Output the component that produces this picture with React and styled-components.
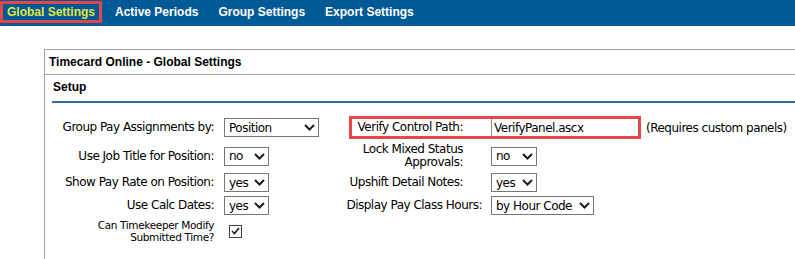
import React from "react";
import styled, { createGlobalStyle } from "styled-components";

const GlobalStyle = createGlobalStyle`
  html, body {
    margin: 0;
    padding: 0;
    background: #ffffff;
    overflow: hidden;
  }
  body {
    font-family: "DejaVu Sans", Verdana, sans-serif;
    color: #000;
  }
`;

const Nav = styled.nav`
  display: flex;
  align-items: flex-start;
  gap: 6px;
  height: 26px;
  padding-top: 1px;
  box-sizing: border-box;
  background: #015a96;
`;

const NavItem = styled.a`
  display: block;
  height: 22px;
  box-sizing: border-box;
  padding: 0 4px;
  border: 3px solid ${(p) => (p.$active ? "#e5474a" : "transparent")};
  font-family: "Liberation Sans", Arial, sans-serif;
  font-weight: bold;
  font-size: 12px;
  line-height: 16px;
  color: ${(p) => (p.$active ? "#e2e63a" : "#ffffff")};
  text-decoration: none;
  white-space: nowrap;
`;

const Page = styled.main`
  padding: 23px 0 0 44px;
`;

const Panel = styled.section`
  min-height: calc(100vh - 49px);
  border: 1px solid #a3a3a3;
  border-right: none;
  border-bottom: none;
  box-sizing: border-box;
`;

const PanelHeader = styled.h1`
  margin: 0;
  height: 25px;
  box-sizing: border-box;
  padding: 0 4px;
  border-bottom: 1px solid #a3a3a3;
  font-family: "Liberation Sans", Arial, sans-serif;
  font-weight: bold;
  font-size: 12px;
  line-height: 24px;
`;

const Section = styled.div`
  margin: 0 0 0 7px;
`;

const SectionTitle = styled.h2`
  margin: 0;
  padding: 5px 1px 7px;
  border-bottom: 2px solid #336699;
  font-family: "Liberation Sans", Arial, sans-serif;
  font-weight: bold;
  font-size: 12px;
  line-height: 14px;
`;

const FormGrid = styled.div`
  display: grid;
  grid-template-columns: 172px 122px 145px 150px auto;
  row-gap: 4px;
  align-items: center;
  padding-top: 13px;
  font-size: 12px;
  letter-spacing: -0.5px;
`;

const Label = styled.label`
  text-align: right;
  padding-right: ${(p) => p.$pad ?? 10}px;
  font-size: ${(p) => (p.$small ? "10.5px" : "12px")};
  line-height: ${(p) => (p.$small ? "12px" : "13px")};
  letter-spacing: ${(p) => (p.$small ? "-0.35px" : "-0.5px")};
  white-space: nowrap;
`;

const Highlight = styled.div`
  grid-column: 3 / 5;
  margin-left: 3px;
  display: flex;
  align-items: center;
  height: 23px;
  box-sizing: border-box;
  border: 3px solid #e5474a;
`;

const InlineLabel = styled.label`
  flex: 0 0 139px;
  box-sizing: border-box;
  padding-right: 28px;
  text-align: right;
  white-space: nowrap;
  line-height: 13px;
`;

const TextInput = styled.input`
  flex: 1;
  min-width: 0;
  height: 17px;
  box-sizing: border-box;
  border: none;
  border-left: 1px solid #8a8a8a;
  padding: 0 0 0 2px;
  font-family: inherit;
  font-size: 12px;
  letter-spacing: -0.5px;
  color: #000;
  background: #fff;
  outline: none;
`;

const Note = styled.span`
  padding-left: 5px;
  white-space: nowrap;
`;

const SelectWrap = styled.span`
  position: relative;
  display: inline-block;
  justify-self: start;
  width: ${(p) => p.$w}px;
  height: 19px;
`;

const NativeSelect = styled.select`
  appearance: none;
  -webkit-appearance: none;
  width: 100%;
  height: 19px;
  box-sizing: border-box;
  margin: 0;
  border: 1px solid #767676;
  border-radius: 0;
  padding: 0 0 0 4px;
  background: #fff;
  font-family: "DejaVu Sans", Verdana, sans-serif;
  font-size: 12px;
  letter-spacing: -0.5px;
  color: #000;
  outline: none;
`;

const Chevron = styled.svg`
  position: absolute;
  right: 4px;
  top: 6px;
  pointer-events: none;
`;

const CheckBox = styled.span`
  justify-self: start;
  margin-left: 5px;
  width: 13px;
  height: 13px;
  box-sizing: border-box;
  border: 1px solid #444;
  background: #fff;
  display: flex;
  align-items: center;
  justify-content: center;
`;

function Select({ w, value, options }) {
  return (
    <SelectWrap $w={w}>
      <NativeSelect defaultValue={value}>
        {options.map((o) => (
          <option key={o}>{o}</option>
        ))}
      </NativeSelect>
      <Chevron width="11" height="7" viewBox="0 0 11 7">
        <path d="M1 1 L5.5 5.5 L10 1" fill="none" stroke="#1b1b1b" strokeWidth="2" />
      </Chevron>
    </SelectWrap>
  );
}

const yesNo = ["yes", "no"];

export default function App() {
  return (
    <>
      <GlobalStyle />
      <Nav>
        <NavItem $active>Global Settings</NavItem>
        <NavItem>Active Periods</NavItem>
        <NavItem>Group Settings</NavItem>
        <NavItem>Export Settings</NavItem>
      </Nav>
      <Page>
        <Panel>
          <PanelHeader>Timecard Online - Global Settings</PanelHeader>
          <Section>
            <SectionTitle>Setup</SectionTitle>
            <FormGrid>
              <Label>Group Pay Assignments by:</Label>
              <Select w={95} value="Position" options={["Position", "Job Title"]} />
              <Highlight>
                <InlineLabel>Verify Control Path:</InlineLabel>
                <TextInput defaultValue="VerifyPanel.ascx" />
              </Highlight>
              <Note>(Requires custom panels)</Note>

              <Label>Use Job Title for Position:</Label>
              <Select w={45} value="no" options={yesNo} />
              <Label $pad={28}>
                Lock Mixed Status
                <br />
                Approvals:
              </Label>
              <Select w={46} value="no" options={yesNo} />
              <span />

              <Label>Show Pay Rate on Position:</Label>
              <Select w={45} value="yes" options={yesNo} />
              <Label $pad={28}>Upshift Detail Notes:</Label>
              <Select w={46} value="yes" options={yesNo} />
              <span />

              <Label>Use Calc Dates:</Label>
              <Select w={45} value="yes" options={yesNo} />
              <Label $pad={9}>Display Pay Class Hours:</Label>
              <Select w={103} value="by Hour Code" options={["by Hour Code", "by Pay Class"]} />
              <span />

              <Label $small>
                Can Timekeeper Modify
                <br />
                Submitted Time?
              </Label>
              <CheckBox role="checkbox" aria-checked="true">
                <svg width="9" height="8" viewBox="0 0 9 8">
                  <path d="M1 4 L3.5 6.5 L8 1" fill="none" stroke="#1b1b1b" strokeWidth="1.6" />
                </svg>
              </CheckBox>
            </FormGrid>
          </Section>
        </Panel>
      </Page>
    </>
  );
}
